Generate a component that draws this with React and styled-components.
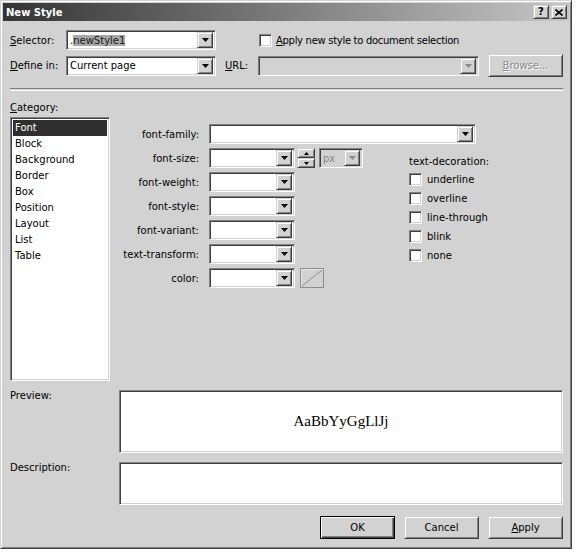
import React from 'react';
import styled, { createGlobalStyle, css } from 'styled-components';

const GlobalStyle = createGlobalStyle`
  html, body {
    margin: 0;
    background: #ffffff;
  }
  body {
    font-family: 'DejaVu Sans', Verdana, sans-serif;
    font-size: 10px;
    color: #000;
  }
`;

const face = '#d2d2d2';

const sunken = css`
  border: 1px solid;
  border-color: #808080 #ffffff #ffffff #808080;
  box-shadow: inset 1px 1px #404040, inset -1px -1px ${face};
`;

const raised = css`
  border: 1px solid;
  border-color: ${face} #404040 #404040 ${face};
  box-shadow: inset 1px 1px #ffffff, inset -1px -1px #808080;
  background: ${face};
`;

const Dialog = styled.div`
  box-sizing: border-box;
  width: 572px;
  height: 549px;
  padding: 2px;
  background: ${face};
  border: 1px solid;
  border-color: ${face} #404040 #404040 ${face};
  box-shadow: inset 1px 1px #ffffff, inset -1px -1px #808080;
`;

const TitleBar = styled.div`
  height: 18px;
  display: flex;
  align-items: center;
  justify-content: space-between;
  padding: 0 2px 0 3px;
  background: linear-gradient(to right, #343434, #c6c6c6);
`;

const Title = styled.span`
  color: #ffffff;
  font-weight: bold;
  font-size: 10px;
`;

const TitleButtons = styled.div`
  display: flex;
  gap: 2px;
`;

const CaptionButton = styled.div`
  ${raised};
  box-sizing: border-box;
  width: 16px;
  height: 14px;
  display: flex;
  align-items: center;
  justify-content: center;
  font-weight: bold;
  font-size: 10px;
  line-height: 1;
`;

const Body = styled.div`
  padding: 9px 6px 0 7px;
`;

const TopRow = styled.div`
  display: flex;
  align-items: center;
  height: ${(p) => p.$h || 20}px;
  margin-top: ${(p) => p.$mt || 0}px;
`;

const Label = styled.span`
  width: ${(p) => (p.$w ? `${p.$w}px` : 'auto')};
  margin-left: ${(p) => p.$ml || 0}px;
  flex-shrink: 0;
  white-space: nowrap;
  letter-spacing: ${(p) => p.$ls || 0}px;
`;

const ComboBox = styled.div`
  ${sunken};
  box-sizing: border-box;
  width: ${(p) => p.$w}px;
  height: 20px;
  margin-left: ${(p) => p.$ml || 0}px;
  padding: 2px;
  display: flex;
  align-items: center;
  background: ${(p) => (p.$disabled ? face : '#ffffff')};
  flex-shrink: 0;
`;

const ComboValue = styled.div`
  flex: 1;
  padding-left: 1px;
  white-space: nowrap;
  overflow: hidden;
  color: ${(p) => (p.$disabled ? '#8a8a8a' : '#000')};
`;

const Selected = styled.span`
  background: #a8a8a8;
  color: #1a1a1a;
  padding: 1px 0;
`;

const DropButton = styled.div`
  ${raised};
  box-sizing: border-box;
  width: 16px;
  height: 16px;
  display: flex;
  align-items: center;
  justify-content: center;
  flex-shrink: 0;
`;

const Arrow = ({ disabled, up, w = 7, h = 4 }) => (
  <svg width={w} height={h} viewBox={`0 0 ${w} ${h}`} style={{ display: 'block' }}>
    <polygon
      points={up ? `0,${h} ${w},${h} ${w / 2},0` : `0,0 ${w},0 ${w / 2},${h}`}
      fill={disabled ? '#8a8a8a' : '#000'}
    />
  </svg>
);

const Combo = ({ w, ml, value, disabled, children }) => (
  <ComboBox $w={w} $ml={ml} $disabled={disabled}>
    <ComboValue $disabled={disabled}>{children || value}</ComboValue>
    <DropButton>
      <Arrow disabled={disabled} />
    </DropButton>
  </ComboBox>
);

const CheckBox = styled.div`
  ${sunken};
  box-sizing: border-box;
  width: 13px;
  height: 13px;
  background: #ffffff;
  flex-shrink: 0;
  margin-left: ${(p) => p.$ml || 0}px;
`;

const PushButton = styled.div`
  ${raised};
  box-sizing: border-box;
  width: 75px;
  height: 23px;
  margin-left: ${(p) => p.$ml || 0}px;
  display: flex;
  align-items: center;
  justify-content: center;
  flex-shrink: 0;
  color: ${(p) => (p.$disabled ? '#8a8a8a' : '#000')};
  text-shadow: ${(p) => (p.$disabled ? '1px 1px #ffffff' : 'none')};
  ${(p) =>
    p.$default &&
    css`
      border: 1px solid #000;
      box-shadow: inset 1px 1px #ffffff, inset -1px -1px #404040,
        inset -2px -2px #808080;
    `}
`;

const Separator = styled.div`
  margin-top: 11px;
  height: 1px;
  border-top: 1px solid #808080;
  border-bottom: 1px solid #ffffff;
`;

const CategoryLabel = styled.div`
  margin-top: 11px;
  line-height: 12px;
`;

const Main = styled.div`
  margin-top: 3px;
  display: flex;
  height: 264px;
`;

const ListBox = styled.div`
  ${sunken};
  box-sizing: border-box;
  width: 100px;
  height: 100%;
  background: #ffffff;
  padding: 2px;
`;

const ListItem = styled.div`
  height: 16px;
  line-height: 16px;
  padding-left: 2px;
  background: ${(p) => (p.$active ? '#2f2f2f' : 'transparent')};
  color: ${(p) => (p.$active ? '#ffffff' : '#000')};
`;

const PropGrid = styled.div`
  margin-top: 7px;
  display: grid;
  grid-template-columns: 89px 190px auto;
  grid-auto-rows: 20px;
  column-gap: 10px;
  row-gap: 4px;
  align-content: start;
`;

const PropLabel = styled.div`
  text-align: right;
  align-self: center;
  white-space: nowrap;
`;

const PropControl = styled.div`
  display: flex;
  align-items: center;
  grid-column: ${(p) => p.$span || 'auto'};
`;

const Spin = styled.div`
  display: flex;
  flex-direction: column;
  margin-left: 2px;
`;

const SpinHalf = styled.div`
  ${raised};
  box-sizing: border-box;
  width: 18px;
  height: 10px;
  display: flex;
  align-items: center;
  justify-content: center;
`;

const Swatch = styled.div`
  box-sizing: border-box;
  width: 24px;
  height: 20px;
  margin-left: 5px;
  border: 1px solid #8c8c8c;
  box-shadow: inset 1px 1px #e6e6e6;
`;

const Decoration = styled.div`
  grid-column: 3;
  grid-row: 2 / span 6;
  padding-top: 7px;
`;

const DecoTitle = styled.div`
  line-height: 13px;
  white-space: nowrap;
`;

const DecoList = styled.div`
  margin-top: 5px;
  display: flex;
  flex-direction: column;
  gap: 6px;
`;

const DecoItem = styled.div`
  display: flex;
  align-items: center;
  gap: 5px;
  height: 13px;
  white-space: nowrap;
`;

const FieldRow = styled.div`
  display: flex;
  margin-top: 9px;
`;

const FieldLabel = styled.div`
  width: 109px;
  flex-shrink: 0;
`;

const TextArea = styled.div`
  ${sunken};
  box-sizing: border-box;
  flex: 1;
  height: ${(p) => p.$h}px;
  background: #ffffff;
  display: flex;
  align-items: center;
  justify-content: center;
`;

const PreviewText = styled.span`
  font-family: 'Liberation Serif', 'Times New Roman', serif;
  font-size: 15px;
`;

const ButtonRow = styled.div`
  margin-top: 11px;
  display: flex;
  justify-content: flex-end;
  gap: 9px;
`;

const categories = ['Font', 'Block', 'Background', 'Border', 'Box', 'Position', 'Layout', 'List', 'Table'];
const fontProps = ['font-weight:', 'font-style:', 'font-variant:', 'text-transform:'];
const decorations = ['underline', 'overline', 'line-through', 'blink', 'none'];

export default function App() {
  return (
    <>
      <GlobalStyle />
      <Dialog>
        <TitleBar>
          <Title>New Style</Title>
          <TitleButtons>
            <CaptionButton>?</CaptionButton>
            <CaptionButton>
              <svg width="8" height="7" viewBox="0 0 8 7">
                <path d="M0.5 0.5L7.5 6.5M7.5 0.5L0.5 6.5" stroke="#000" strokeWidth="1.6" />
              </svg>
            </CaptionButton>
          </TitleButtons>
        </TitleBar>

        <Body>
          <TopRow>
            <Label $w={56}>
              <u>S</u>elector:
            </Label>
            <Combo w={150}>
              .<Selected>newStyle1</Selected>
            </Combo>
            <CheckBox $ml={43} />
            <Label $ml={4} $ls={-0.3}>
              <u>A</u>pply new style to document selection
            </Label>
          </TopRow>

          <TopRow $h={23} $mt={4}>
            <Label $w={56}>
              <u>D</u>efine in:
            </Label>
            <Combo w={150} value="Current page" />
            <Label $w={33} $ml={9}>
              <u>U</u>RL:
            </Label>
            <Combo w={221} disabled />
            <PushButton $ml={9} $disabled>
              <span>
                <u>B</u>rowse...
              </span>
            </PushButton>
          </TopRow>

          <Separator />

          <CategoryLabel>
            <u>C</u>ategory:
          </CategoryLabel>

          <Main>
            <ListBox>
              {categories.map((c, i) => (
                <ListItem key={c} $active={i === 0}>
                  {c}
                </ListItem>
              ))}
            </ListBox>

            <PropGrid>
              <PropLabel>font-family:</PropLabel>
              <PropControl $span="2 / 4">
                <Combo w={267} />
              </PropControl>

              <PropLabel>font-size:</PropLabel>
              <PropControl>
                <Combo w={86} />
                <Spin>
                  <SpinHalf>
                    <Arrow up w={5} h={3} />
                  </SpinHalf>
                  <SpinHalf>
                    <Arrow w={5} h={3} />
                  </SpinHalf>
                </Spin>
                <Combo w={44} ml={4} value="px" disabled />
              </PropControl>

              <Decoration>
                <DecoTitle>text-decoration:</DecoTitle>
                <DecoList>
                  {decorations.map((d) => (
                    <DecoItem key={d}>
                      <CheckBox />
                      <span>{d}</span>
                    </DecoItem>
                  ))}
                </DecoList>
              </Decoration>

              {fontProps.map((p) => (
                <React.Fragment key={p}>
                  <PropLabel>{p}</PropLabel>
                  <PropControl>
                    <Combo w={86} />
                  </PropControl>
                </React.Fragment>
              ))}

              <PropLabel>color:</PropLabel>
              <PropControl>
                <Combo w={86} />
                <Swatch>
                  <svg width="22" height="18" viewBox="0 0 22 18" style={{ display: 'block' }}>
                    <line x1="1" y1="17" x2="21" y2="1" stroke="#8c8c8c" strokeWidth="1" />
                  </svg>
                </Swatch>
              </PropControl>
            </PropGrid>
          </Main>

          <FieldRow>
            <FieldLabel>Preview:</FieldLabel>
            <TextArea $h={63}>
              <PreviewText>AaBbYyGgLlJj</PreviewText>
            </TextArea>
          </FieldRow>

          <FieldRow>
            <FieldLabel>Description:</FieldLabel>
            <TextArea $h={43} />
          </FieldRow>

          <ButtonRow>
            <PushButton $default>OK</PushButton>
            <PushButton>Cancel</PushButton>
            <PushButton>
              <span>
                <u>A</u>pply
              </span>
            </PushButton>
          </ButtonRow>
        </Body>
      </Dialog>
    </>
  );
}
